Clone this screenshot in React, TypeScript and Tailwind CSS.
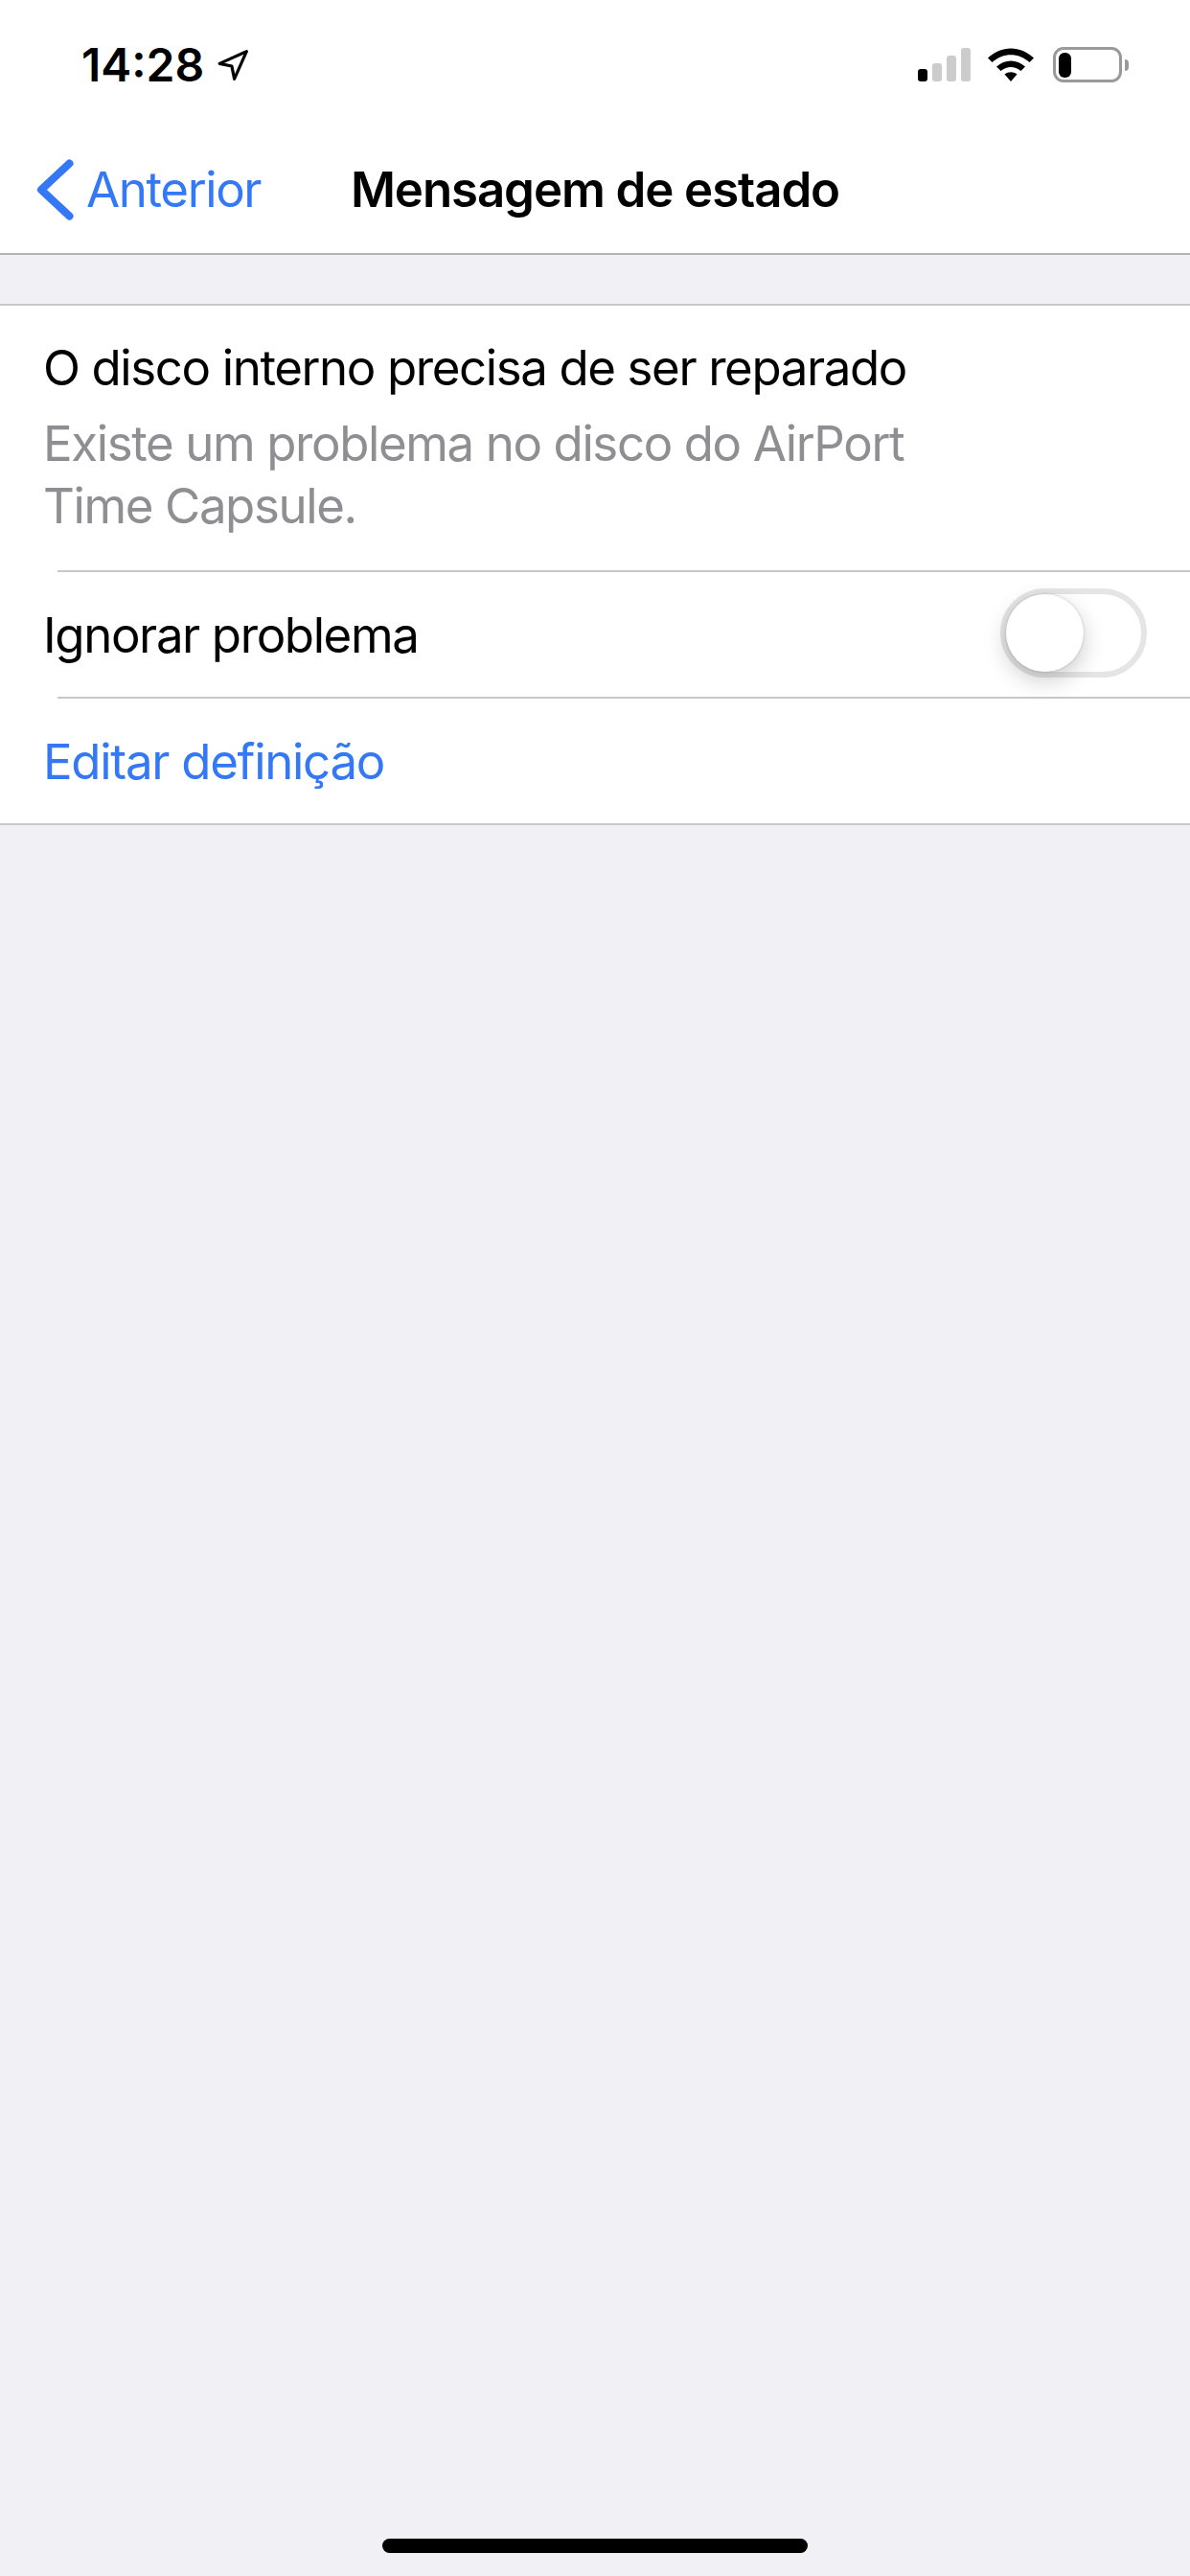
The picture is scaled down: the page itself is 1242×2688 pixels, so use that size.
const SignalIcon = () => (
  <svg width="56" height="36" viewBox="0 0 56 36" className="block">
    <rect x="1" y="22" width="10" height="13" rx="3" fill="#000" />
    <rect x="16" y="16" width="10" height="19" rx="3" fill="#ccc" />
    <rect x="31" y="8" width="10" height="27" rx="3" fill="#ccc" />
    <rect x="46" y="0" width="10" height="35" rx="3" fill="#ccc" />
  </svg>
);

const WifiIcon = () => (
  <svg width="48" height="36" viewBox="0 0 48 36" className="block">
    <path d="M0 10.500C14-3 34-3 48 10.500L43.500 15C32 4.500 16 4.500 4.500 15Z" fill="#000" />
    <path d="M9 19.500C18 11.500 30 11.500 39 19.500L34.500 24C27.500 18.500 20.500 18.500 13.500 24Z" fill="#000" />
    <path d="M17.500 27.500C21.500 24.500 26.500 24.500 30.500 27.500L24 35Z" fill="#000" />
  </svg>
);

const LocationIcon = () => (
  <svg width="34" height="34" viewBox="0 0 32 32" fill="none" className="block">
    <path
      d="M29.500 2.500 3 14.500 15 17 17.500 29.500Z"
      stroke="#000"
      strokeWidth="3"
      strokeLinejoin="round"
    />
  </svg>
);

const Toggle = () => (
  <div className="mb-[4px] flex h-[93px] w-[153px] items-center rounded-full border-[6px] border-[#e5e5e5] bg-white">
    <div className="h-[81px] w-[81px] rounded-full bg-white shadow-[0_9px_24px_rgba(0,0,0,0.2),0_0_3px_rgba(0,0,0,0.2)]" />
  </div>
);

export default function App() {
  return (
    <div className="flex h-[2688px] w-[1242px] flex-col overflow-hidden bg-[#f0f0f5] [font-family:Inter,sans-serif]">
      <div className="bg-white">
        <div className="flex h-[134px] items-center justify-between pl-[85px] pr-[64px] pt-[1px]">
          <div className="flex items-center gap-[13px]">
            <span className="text-[48px] font-semibold leading-none text-black">14:28</span>
            <LocationIcon />
          </div>
          <div className="flex items-center">
            <SignalIcon />
            <div className="ml-[18px]">
              <WifiIcon />
            </div>
            <div className="ml-[20px] flex items-center">
              <div className="flex h-[37px] w-[72px] items-center rounded-[11px] border-[3px] border-[#999] px-[3px]">
                <div className="h-[26px] w-[13px] rounded-[6px] bg-black" />
              </div>
              <div className="ml-[3px] h-[12px] w-[4px] rounded-r-full bg-[#999]" />
            </div>
          </div>
        </div>
        <div className="grid h-[132px] grid-cols-[1fr_auto_1fr] items-center border-b-[2px] border-[#b2b2b2] pb-[3px]">
          <div className="flex items-center pl-[38px]">
            <svg width="40" height="64" viewBox="0 0 40 64" fill="none" className="block">
              <path
                d="M34.500 4.500 5 32 34.500 59.500"
                stroke="#3478f6"
                strokeWidth="8"
                strokeLinecap="round"
                strokeLinejoin="round"
              />
            </svg>
            <span className="ml-[12px] text-[51px] leading-none tracking-[-1.4px] text-[#3478f6]">
              Anterior
            </span>
          </div>
          <div className="text-[51px] font-semibold leading-none tracking-[-1.1px] text-black">
            Mensagem de estado
          </div>
          <div />
        </div>
      </div>

      <div className="mt-[51px] border-y-[2px] border-[#c8c7cc] bg-white">
        <div className="pb-[35px] pl-[45px] pr-[180px] pt-[33px] text-[51px] tracking-[-1.4px]">
          <div className="leading-[64px] text-black">O disco interno precisa de ser reparado</div>
          <div className="mt-[14px] leading-[65px] text-[#8e8e93]">
            Existe um problema no disco do AirPort Time Capsule.
          </div>
        </div>
        <div className="ml-[60px] h-[2px] bg-[#c8c7cc]" />
        <div className="flex h-[130px] items-center justify-between pl-[45px] pr-[45px] text-[51px] tracking-[-1.4px] text-black">
          <span className="pt-[2px]">Ignorar problema</span>
          <Toggle />
        </div>
        <div className="ml-[60px] h-[2px] bg-[#c8c7cc]" />
        <div className="flex h-[130px] items-center pl-[45px] pt-[2px] text-[51px] tracking-[-1.3px] text-[#3478f6]">
          Editar definição
        </div>
      </div>

      <div className="mt-auto mb-[24px] h-[15px] w-[444px] self-center rounded-full bg-black" />
    </div>
  );
}
